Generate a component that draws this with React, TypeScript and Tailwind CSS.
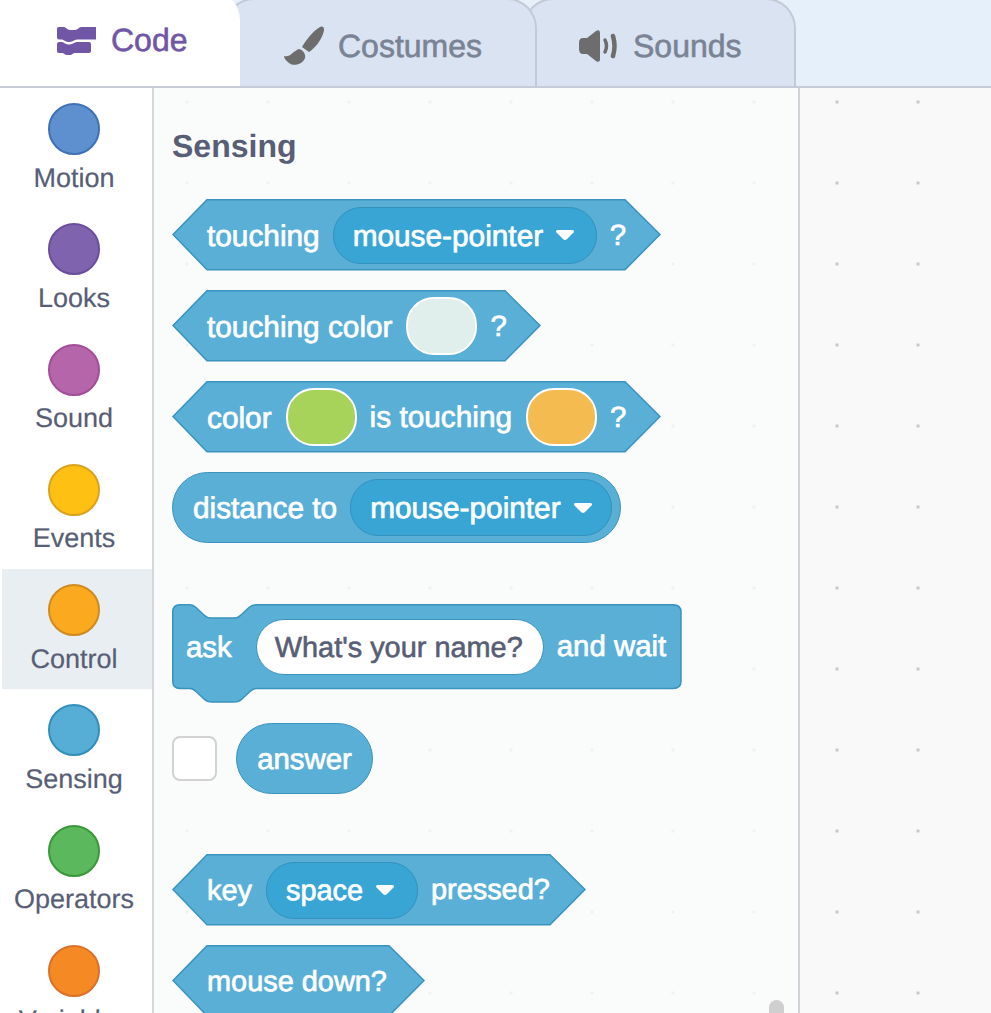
import React from "react";

const BLOCK = "#5aafd7";
const EDGE = "#3a93bd";
const labelBase = "inline-block pt-[3px] leading-none text-white whitespace-nowrap [-webkit-text-stroke:0.7px_white]";

function Arrow() {
  return (
    <svg width="20" height="12" viewBox="0 0 20 12" className="shrink-0">
      <path d="M3 1 H17 Q20 1 18.5 3.5 L12 10 Q10 12 8 10 L1.5 3.5 Q0 1 3 1 Z" fill="#fff" />
    </svg>
  );
}

function Label({ size = "md", children }: { size?: "sm" | "md" | "lg"; children: React.ReactNode }) {
  const sizeCls = size === "lg" ? "text-[29.8px]" : size === "sm" ? "text-[28.9px]" : "text-[29.4px]";
  return <span className={`${labelBase} ${sizeCls}`}>{children}</span>;
}

function Dropdown({ className, size = "lg", children }: { className: string; size?: "sm" | "lg"; children: React.ReactNode }) {
  return (
    <div className={`flex h-[57px] shrink-0 items-center gap-3 rounded-[28px] border border-[#3491bc] bg-[#38a5d5] pl-[19px] ${className}`}>
      <Label size={size}>{children}</Label>
      <Arrow />
    </div>
  );
}

function Swatch({ className }: { className: string }) {
  return <div className={`h-[58px] w-[71px] shrink-0 rounded-[28px] border-2 border-white ${className}`} />;
}

function Hex({ w, className, children }: { w: number; className: string; children: React.ReactNode }) {
  const h = 71;
  return (
    <div className={`relative flex h-[72px] items-center ${className}`}>
      <svg width={w} height={h + 1} className="absolute left-0 top-0">
        <path
          d={`M35 0.75 H${w - 36} L${w - 1} ${h / 2} L${w - 36} ${h - 0.25} H35 L1 ${h / 2} Z`}
          fill={BLOCK}
          stroke={EDGE}
          strokeWidth="1.5"
        />
      </svg>
      <div className="relative flex items-center pl-[35px]">{children}</div>
    </div>
  );
}

function Category({ name, fill, active }: { name: string; fill: string; active?: boolean }) {
  return (
    <div className={`h-[120.3px] w-[150px] pt-[15px] ${active ? "bg-[#e9eef2]" : ""}`}>
      <div className="flex w-[144px] flex-col items-center">
        <div className={`h-[52px] w-[52px] rounded-full border-2 ${fill}`} />
        <div className="mt-[6.5px] whitespace-nowrap text-[27px] leading-[32px] text-[#575e75] [-webkit-text-stroke:0.2px_#575e75]">{name}</div>
      </div>
    </div>
  );
}

function CodeIcon() {
  return (
    <svg width="40" height="28" viewBox="0 0 40 28" className="shrink-0">
      <path
        d="M2 0 H7 C9 0 10 3 13 3 H18 C21 3 22 0 24 0 H39 V12.5 H20 C17 12.5 16 15 13 15 H11 C8 15 7 12.5 5 12.5 H2 Q0 12.5 0 10.5 V2 Q0 0 2 0 Z"
        fill="#7156a6"
      />
      <path
        d="M2 15 H5 C7 15 8 17.5 11 17.5 H13 C16 17.5 17 15 20 15 H32 Q34 15 34 17 V24 Q34 26 32 26 H18 C16 26 15 28 13 28 H10 C8 28 7 26 5 26 H2 Q0 26 0 24 V17 Q0 15 2 15 Z"
        fill="#7156a6"
      />
    </svg>
  );
}

function BrushIcon() {
  return (
    <svg width="40" height="40" viewBox="0 0 40 40" className="shrink-0">
      <path d="M36 1 C40 -1 41 3 39 8 C36 16 30 23 25 26 L18 21 C22 14 29 5 36 1 Z" fill="#6d6d6d" />
      <path d="M15 23 C19 24 22 28 21 32 C19 38 10 41 5 37 C2 35 0 32 0 30 C6 32 9 25 15 23 Z" fill="#6d6d6d" />
    </svg>
  );
}

function SoundIcon() {
  return (
    <svg width="39" height="32" viewBox="0 0 39 32" className="shrink-0">
      <path d="M18 1 C21 -1 22 1 22 3 V29 C22 31 21 33 18 31 L9 24 H5 Q1 24 1 19 V13 Q1 8 5 8 H9 Z" fill="#6d6d6d" />
      <path d="M27 10 Q30 16 27 22" stroke="#6d6d6d" strokeWidth="3.5" fill="none" strokeLinecap="round" />
      <path d="M35 6 Q38 16 35 26" stroke="#6d6d6d" strokeWidth="4.5" fill="none" strokeLinecap="round" />
    </svg>
  );
}

export default function App() {
  return (
    <div className="h-[1013px] w-[991px] overflow-hidden bg-white font-['Liberation_Sans',Arial,sans-serif] [text-rendering:geometricPrecision]">
      <div className="relative flex h-[88px] overflow-hidden border-b-2 border-[#c5ccd8] bg-[#e6f0fb]">
        <div className="relative z-30 -mt-[10px] flex h-[98px] w-[240px] shrink-0 items-center gap-[14px] rounded-tr-[30px] bg-white pl-[57px] pt-[4px]">
          <CodeIcon />
          <span className="-mt-[2px] text-[32px] leading-none text-[#7156a6] [-webkit-text-stroke:0.6px_#7156a6]">Code</span>
        </div>
        <div className="relative z-20 -ml-[16px] -mt-[2px] flex h-[88px] w-[313px] shrink-0 items-center gap-[14px] rounded-t-[30px] border-2 border-b-0 border-[#c3cad6] bg-[#d9e3f2] pl-[58px] pt-[6px]">
          <BrushIcon />
          <span className="text-[32px] leading-none text-[#7a8394] [-webkit-text-stroke:0.6px_#7a8394]">Costumes</span>
        </div>
        <div className="relative z-10 -ml-[14px] -mt-[2px] flex h-[88px] w-[273px] shrink-0 items-center gap-[16px] rounded-t-[30px] border-2 border-b-0 border-[#c3cad6] bg-[#d9e3f2] pl-[53px] pt-[6px]">
          <SoundIcon />
          <span className="text-[32px] leading-none text-[#7a8394] [-webkit-text-stroke:0.6px_#7a8394]">Sounds</span>
        </div>
      </div>

      <div className="flex h-[925px]">
        <div className="w-[154px] shrink-0 border-r-2 border-[#d4d7db] bg-white pl-[2px]">
          <Category name="Motion" fill="bg-[#5e90cf] border-[#3f70b8]" />
          <Category name="Looks" fill="bg-[#7f63ae] border-[#6a4f9c]" />
          <Category name="Sound" fill="bg-[#b565aa] border-[#a14d98]" />
          <Category name="Events" fill="bg-[#ffc014] border-[#d9a21c]" />
          <Category name="Control" fill="bg-[#fba91f] border-[#cf8b20]" active />
          <Category name="Sensing" fill="bg-[#56add6] border-[#338fba]" />
          <Category name="Operators" fill="bg-[#5cb85c] border-[#3b973b]" />
          <Category name="Variables" fill="bg-[#f58a24] border-[#d9712a]" />
        </div>

        <div className="relative w-[646px] shrink-0 overflow-hidden border-r-2 border-[#d0d4d9] bg-[#fafbfb] bg-[radial-gradient(circle,#f0f1f1_1.5px,transparent_1.5px)] bg-[length:81px_81px] bg-[position:-7.5px_-26.5px] pl-[18px] pt-[40px]">
          <div className="text-[32px] font-bold leading-[36px] text-[#575e75]">Sensing</div>

          <Hex w={489} className="mt-[35px]">
            <Label size="lg">touching</Label>
            <Dropdown className="ml-[13px] w-[264px]">mouse-pointer</Dropdown>
            <span className="ml-[13px]"><Label>?</Label></span>
          </Hex>

          <Hex w={369} className="mt-[19px]">
            <Label size="lg">touching color</Label>
            <Swatch className="ml-[13px] bg-[#e0eeec]" />
            <span className="ml-[14px]"><Label>?</Label></span>
          </Hex>

          <Hex w={489} className="mt-[19px]">
            <Label size="lg">color</Label>
            <Swatch className="ml-[14px] bg-[#a7d35a]" />
            <span className="ml-[13px]"><Label size="lg">is touching</Label></span>
            <Swatch className="ml-[14px] bg-[#f4bc50]" />
            <span className="ml-[13px]"><Label>?</Label></span>
          </Hex>

          <div className="mt-[19px] flex h-[71px] w-[449px] items-center rounded-[36px] border-[1.5px] border-[#3a93bd] bg-[#5aafd7] pl-[20px]">
            <Label size="lg">distance to</Label>
            <Dropdown className="ml-[13px] w-[262px]">mouse-pointer</Dropdown>
          </div>

          <div className="relative mt-[61px] flex h-[99px] w-[510px] items-start">
            <svg width="510" height="99" className="absolute left-0 top-0">
              <path
                d="M8 0.75 H18 Q21 0.75 24 3.5 L32 11 Q35 14 39 14 H62 Q66 14 69 11 L77 3.5 Q80 0.75 84 0.75 H501 Q509 0.75 509 8 V77 Q509 84.5 501 84.5 H84 Q81 84.5 78 87.5 L70 95 Q67 98 62 98 H40 Q35 98 32 95 L24 87.5 Q21 84.5 18 84.5 H8 Q0.75 84.5 0.75 77 V8 Q0.75 0.75 8 0.75 Z"
                fill={BLOCK}
                stroke={EDGE}
                strokeWidth="1.5"
              />
            </svg>
            <div className="relative flex h-[85px] items-center pl-[14px]">
              <Label>ask</Label>
              <div className="ml-[24px] flex h-[56px] w-[288px] items-center rounded-[28px] border-[1.5px] border-[#3a93bd] bg-white pl-[18px]">
                <span className="whitespace-nowrap pt-[3px] text-[28.9px] leading-none text-[#575e75] [-webkit-text-stroke:0.6px_#575e75]">What's your name?</span>
              </div>
              <span className="ml-[13px]"><Label>and wait</Label></span>
            </div>
          </div>

          <div className="mt-[20px] flex h-[71px] items-center gap-[19px]">
            <div className="h-[45px] w-[45px] rounded-[8px] border-2 border-[#d2d2d2] bg-white" />
            <div className="flex h-[71px] w-[137px] items-center justify-center rounded-[36px] border-[1.5px] border-[#3a93bd] bg-[#5aafd7]">
              <Label>answer</Label>
            </div>
          </div>

          <Hex w={414} className="mt-[60px]">
            <Label size="sm">key</Label>
            <Dropdown size="sm" className="ml-[14px] w-[152px]">space</Dropdown>
            <span className="ml-[13px]"><Label size="sm">pressed?</Label></span>
          </Hex>

          <Hex w={253} className="mt-[19px]">
            <Label size="sm">mouse down?</Label>
          </Hex>

          <div className="absolute left-[615px] top-[912px] h-[40px] w-[15px] rounded-[8px] bg-[#cfcfcf]" />
        </div>

        <div className="grow bg-[#f9f9f9] bg-[radial-gradient(circle,#c9c9c9_1.5px,transparent_1.5px)] bg-[length:81px_81px] bg-[position:-3.5px_-26.5px]" />
      </div>
    </div>
  );
}
